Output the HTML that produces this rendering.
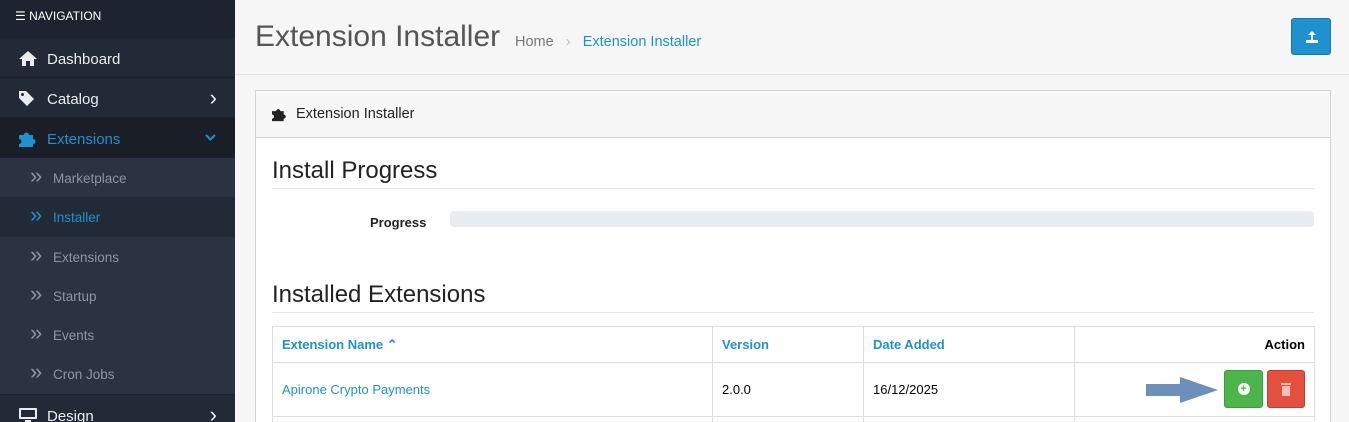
<!DOCTYPE html>
<html style="overflow:hidden;height:422px"><head><style>
*{box-sizing:border-box;margin:0;padding:0}
body{width:1349px;height:422px;overflow:hidden;font-family:"Liberation Sans",sans-serif;background:#f6f6f6;position:relative;font-size:13px}
#side{position:absolute;left:0;top:0;width:235px;height:422px;background:#2b3242;overflow:hidden}
.nh{height:38px;background:#1d2330;color:#fff;font-size:12px;padding:9px 0 0 15px}
.it{height:40px;background:#232a37;border-bottom:1px solid #1c222d;color:#e9edf0;font-size:15px;padding:13px 0 0 47px;position:relative}
.it .ic{position:absolute;left:19px;top:13px}
.it .ar{position:absolute;right:18px;top:7px;font-size:22px}
.act{background:#1a1e26;color:#1e91cf}
.sub{height:39.3px;color:#8a96a5;font-size:13.5px;padding:13px 0 0 53px;position:relative}
.sub:before{content:"»";position:absolute;left:30px;top:5px;font-size:22px}
.sa{background:#232a37;color:#1e91cf}
#hdr{position:absolute;left:235px;top:0;right:0;height:75px;border-bottom:1px solid #e3e3e3}
h1{position:absolute;left:20px;top:20px;font-weight:300;font-size:30px;color:#555}
.bc{position:absolute;left:280px;top:34px;font-size:14.5px;color:#777}
.bc span{color:#1e91cf}
.up{position:absolute;right:18px;top:18px;width:40px;height:37px;background:#1e91cf;border-radius:3px;border:1px solid #1978ab}
#pan{position:absolute;left:255px;top:90px;width:1076px;height:332px;border:1px solid #d3d3d3;border-bottom:none;background:#fff;overflow:hidden}
.ph{height:47px;background:#f7f7f7;border-bottom:1px solid #d3d3d3;padding:15px 0 0 40px;font-size:14.5px;color:#222;position:relative}
h3{position:absolute;left:16px;font-weight:400;font-size:24px;color:#222;width:1042px;border-bottom:1px solid #e5e5e5;height:32px}
table{position:absolute;left:16px;top:235px;width:1043px;border-collapse:collapse}
td{border:1px solid #ddd;height:54px;padding:0 9px;font-size:13px}
th{border:1px solid #ddd;height:36px;padding:0 9px;font-size:13px;text-align:left;color:#1e91cf}
</style></head><body>
<div id="side">
<div class="nh">☰ NAVIGATION</div>
<div class="it"><svg class="ic" width="18" height="15" viewBox="0 0 18 15"><path d="M9 0L0 8h3v7h4v-5h4v5h4V8h3z" fill="#e9edf0"/></svg>Dashboard</div>
<div class="it"><svg class="ic" width="15" height="15" viewBox="0 0 15 15"><path d="M0 0h7l8 8-7 7-8-8z" fill="#e9edf0"/><circle cx="3.5" cy="3.5" r="1.5" fill="#232a37"/></svg>Catalog<span class="ar">›</span></div>
<div class="it act"><svg class="ic" width="18" height="16" viewBox="0 0 18 16"><path d="M0 4h5a2.5 2.5 0 1 1 5 0h4v4a2.5 2.5 0 1 1 0 5v3H0v-3a2.5 2.5 0 1 0 0-5z" fill="#1e91cf"/></svg>Extensions<svg style="position:absolute;right:19px;top:16px" width="11" height="7" viewBox="0 0 11 7"><path d="M1 1l4.5 4.5L10 1" stroke="#1e91cf" stroke-width="2" fill="none"/></svg></div>
<div class="sub">Marketplace</div>
<div class="sub sa">Installer</div>
<div class="sub">Extensions</div>
<div class="sub">Startup</div>
<div class="sub">Events</div>
<div class="sub">Cron Jobs</div>
<div class="it" style="border-top:1px solid #1c222d"><svg class="ic" width="18" height="15" viewBox="0 0 18 15"><rect x="0" y="0" width="18" height="11" rx="1" fill="#e9edf0"/><rect x="2" y="2" width="14" height="7" fill="#232a37"/><rect x="6" y="12" width="6" height="3" fill="#e9edf0"/></svg>Design<span class="ar">›</span></div>
</div>
<div id="hdr"><h1>Extension Installer</h1><div class="bc">Home &nbsp;&nbsp;<span style="color:#bbb">›</span>&nbsp;&nbsp; <span>Extension Installer</span></div>
<div class="up"><svg width="40" height="37" viewBox="0 0 40 37"><path d="M20 12l-4 4h3v5h2v-5h3z M14 21h12v3H14z" fill="#fff"/></svg></div></div>
<div id="pan">
<div class="ph"><svg style="position:absolute;left:16px;top:16px" width="15" height="15" viewBox="0 0 18 16"><path d="M0 4h5a2.5 2.5 0 1 1 5 0h4v4a2.5 2.5 0 1 1 0 5v3H0v-3a2.5 2.5 0 1 0 0-5z" fill="#222"/></svg>Extension Installer</div>
<h3 style="top:66px">Install Progress</h3>
<div style="position:absolute;left:114px;top:124px;font-weight:bold;font-size:13px;color:#222">Progress</div>
<div style="position:absolute;left:194px;top:120px;width:864px;height:16px;background:#e9ecef;border-radius:4px"></div>
<h3 style="top:190px">Installed Extensions</h3>
<table>
<tr><th style="width:440px">Extension Name ⌃</th><th style="width:151px">Version</th><th style="width:211px">Date Added</th><th style="text-align:right;color:#000">Action</th></tr>
<tr><td style="color:#1e91cf">Apirone Crypto Payments</td><td>2.0.0</td><td>16/12/2025</td><td style="position:relative">
<svg style="position:absolute;left:69px;top:12px" width="76" height="30" viewBox="0 0 76 30"><path d="M2 9h34V2l38 13-38 13v-7H2z" fill="#6d8fbb"/></svg>
<div style="position:absolute;right:51px;top:7px;width:39px;height:38px;background:#4cb64c;border:1px solid #3e9b3e;border-radius:3px"><div style="width:12px;height:12px;border-radius:50%;background:#fff;margin:12px auto;color:#4cb64c;font-size:11px;line-height:12px;text-align:center;font-weight:bold">+</div></div>
<div style="position:absolute;right:9px;top:7px;width:38px;height:38px;background:#e3503e;border:1px solid #c73d2c;border-radius:3px"><svg width="36" height="36" viewBox="0 0 36 36"><path d="M13 12h10v2H13z M14 15h8v10h-8z" fill="#f5c0b8"/></svg></div>
</td></tr>
<tr><td></td><td></td><td></td><td></td></tr>
</table>
</div>
</body></html>
